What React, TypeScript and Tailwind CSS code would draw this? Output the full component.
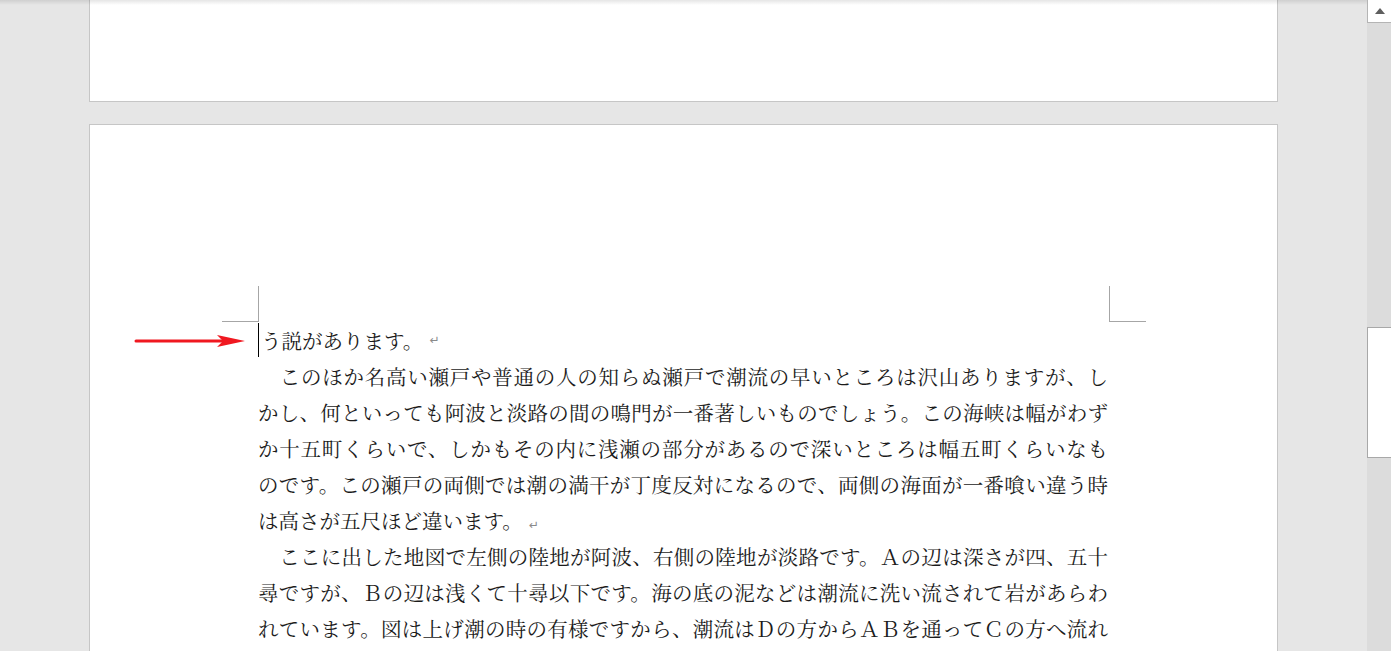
import React from 'react';

const jp = "font-['Noto_Serif_CJK_JP','Noto_Serif_CJK','Noto_Sans_CJK_JP',serif]";

const Mark = () => <span className="ml-[6px] text-[12px] text-[#8a8a8a] font-['DejaVu_Sans',sans-serif]">↵</span>;

// 行ごとに両端揃え（Word の表示を再現）
const Line = ({ children, indent, last }: { children: React.ReactNode; indent?: boolean; last?: boolean }) => (
    <div
        className={`h-[36px] leading-[36px] whitespace-nowrap ${last ? 'text-left' : 'text-justify [text-align-last:justify]'}`}
    >
        {indent && <span className="inline-block w-[21px]" />}
        {children}
    </div>
);

const RedArrow = () => (
    <svg className="absolute left-[134px] top-[334px]" width="114" height="14" viewBox="0 0 114 14">
        <line x1="2" y1="7" x2="90" y2="7" stroke="#f01820" strokeWidth="3" strokeLinecap="round" />
        <polygon points="83,1 111,7 83,13 89,7" fill="#f01820" />
    </svg>
);

const Scrollbar = () => (
    <div className="w-[24px] h-full flex flex-col bg-[#dcdcdc]">
        <div className="h-[23px] bg-white border-l border-b border-[#b4b4b4] flex items-center justify-center">
            <svg width="12" height="8" viewBox="0 0 12 8">
                <polygon points="6,1 11,7 1,7" fill="#5e5e5e" />
            </svg>
        </div>
        <div className="h-[304px]" />
        <div className="h-[131px] bg-white border-l border-t border-b border-[#a8a8a8]" />
        <div className="flex-1" />
    </div>
);

export default function App() {
    return (
        <div className={`relative w-[1391px] h-[651px] overflow-hidden flex bg-[#e6e6e6] text-[#1b1b1b] ${jp}`}>
            {/* Document area */}
            <div className="flex-1 h-full flex flex-col pl-[89px]">
                {/* Bottom of previous page */}
                <div className="w-[1189px] h-[102px] shrink-0 bg-white border-x border-b border-[#c6c6c6]" />

                {/* Current page */}
                <div className="mt-[22px] w-[1189px] flex-1 bg-white border-x border-t border-[#c6c6c6] pt-[161px]">
                    <div className="ml-[132px] w-[924px] flex justify-between">
                        <div className="w-[37px] h-[36px] border-r border-b border-[#a6a6a6]" />
                        <div className="w-[37px] h-[36px] border-l border-b border-[#a6a6a6]" />
                    </div>

                    <div className="ml-[168px] w-[850px] text-[20.5px]">
                        <div className="h-[36px] leading-[36px] whitespace-nowrap flex items-center">
                            <span className="inline-block w-px h-[34px] bg-black mr-[2px]" />
                            <span>う説があります。</span>
                            <Mark />
                        </div>
                        <Line indent>このほか名高い瀬戸や普通の人の知らぬ瀬戸で潮流の早いところは沢山ありますが、し</Line>
                        <Line>かし、何といっても阿波と淡路の間の鳴門が一番著しいものでしょう。この海峡は幅がわず</Line>
                        <Line>か十五町くらいで、しかもその内に浅瀬の部分があるので深いところは幅五町くらいなも</Line>
                        <Line>のです。この瀬戸の両側では潮の満干が丁度反対になるので、両側の海面が一番喰い違う時</Line>
                        <Line last>
                            は高さが五尺ほど違います。
                            <Mark />
                        </Line>
                        <Line indent>ここに出した地図で左側の陸地が阿波、右側の陸地が淡路です。Ａの辺は深さが四、五十</Line>
                        <Line>尋ですが、Ｂの辺は浅くて十尋以下です。海の底の泥などは潮流に洗い流されて岩があらわ</Line>
                        <Line>れています。図は上げ潮の時の有様ですから、潮流はＤの方からＡＢを通ってＣの方へ流れ</Line>
                    </div>
                </div>
            </div>

            <Scrollbar />

            {/* toolbar shadow along the top edge */}
            <div className="absolute top-0 left-0 w-[1367px] h-[5px] bg-gradient-to-b from-black/10 to-transparent" />

            <RedArrow />
        </div>
    );
}
